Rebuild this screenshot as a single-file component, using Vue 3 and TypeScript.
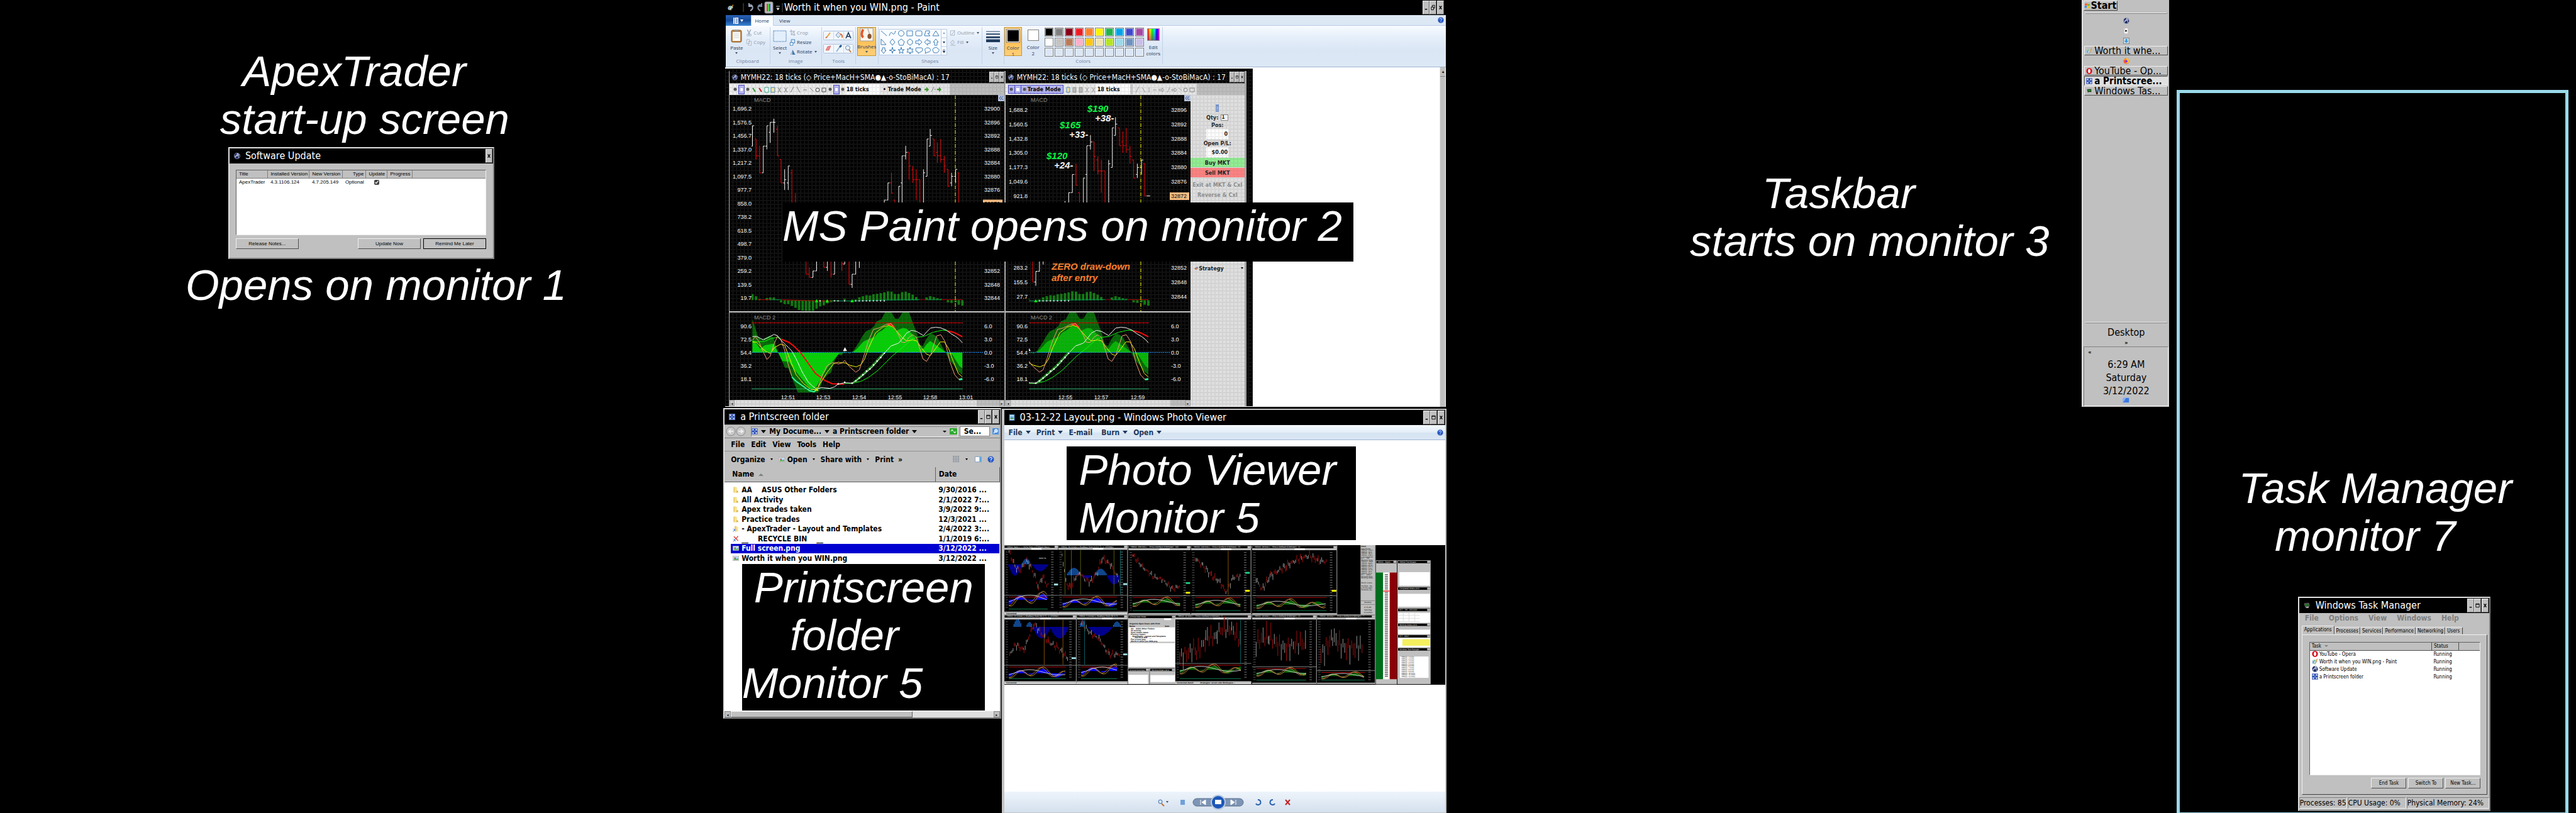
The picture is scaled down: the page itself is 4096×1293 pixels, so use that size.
<script setup lang="ts">
type Pt = [number, number]

const pts = (list: Pt[]): string => list.map((p) => p.join(',')).join(' ')

const captions = [
  { cls: 'cap-apex', lines: ['  ApexTrader', 'start-up screen'] },
  { cls: 'cap-opens', lines: ['Opens on monitor 1'] },
  { cls: 'cap-taskbar', lines: ['      Taskbar', 'starts on monitor 3'] },
  { cls: 'cap-manager', lines: ['Task Manager', '   monitor 7'] },
  { cls: 'boxed cap-paint', lines: ['MS Paint opens on monitor 2'] },
  { cls: 'boxed cap-folder', lines: [' Printscreen', '    folder', 'Monitor 5'] },
  { cls: 'boxed cap-photo', lines: [' Photo Viewer', ' Monitor 5'] },
]

// Price bars: x, high, low, open, close, falling
type Bar = [number, number, number, number, number, boolean]
const bars: Bar[] = [
  [138, 965, 1122, 1122, 965, false], [153, 1067, 1225, 1067, 1197, true], [168, 1120, 1328, 1197, 1328, true],
  [183, 1122, 1328, 1328, 1122, false], [198, 965, 1147, 1122, 965, false], [212, 938, 1097, 1015, 938, false],
  [227, 911, 1018, 938, 938, false], [242, 965, 1197, 992, 1197, true], [257, 1225, 1406, 1225, 1406, true],
  [272, 1301, 1461, 1406, 1381, false], [287, 1275, 1461, 1406, 1275, false], [302, 1301, 1562, 1328, 1562, true],
  [317, 1485, 1700, 1562, 1700, true], [332, 1640, 1860, 1700, 1800, true], [347, 1760, 1980, 1800, 1980, true],
  [361, 1900, 2110, 1980, 2110, true], [375, 2057, 2135, 2110, 2135, true], [390, 2085, 2135, 2135, 2085, false],
  [405, 1900, 2085, 2085, 1900, false], [420, 1850, 2000, 1900, 1950, true], [435, 1900, 2057, 1950, 2057, true],
  [450, 1920, 2085, 2057, 1950, false], [465, 1930, 2135, 1950, 2110, true], [480, 1900, 2110, 2110, 1920, false],
  [495, 1850, 1990, 1920, 1930, true], [510, 1930, 2085, 1930, 2030, true], [522, 1900, 2032, 2032, 1950, false],
  [540, 1950, 2188, 1950, 2188, true], [553, 2110, 2216, 2188, 2110, false], [568, 1940, 2110, 2110, 1960, false],
  [583, 1850, 2061, 1960, 1900, false], [598, 1800, 1940, 1900, 1850, false], [613, 1760, 1900, 1850, 1800, false],
  [627, 1740, 1860, 1800, 1780, false], [642, 1700, 1830, 1780, 1720, false], [657, 1660, 1800, 1720, 1700, false],
  [672, 1600, 1740, 1700, 1620, false], [687, 1538, 1700, 1620, 1538, false], [702, 1406, 1538, 1538, 1406, false],
  [717, 1328, 1485, 1406, 1485, true], [731, 1538, 1700, 1538, 1650, true], [747, 1432, 1650, 1650, 1432, false],
  [761, 1197, 1640, 1406, 1197, false], [776, 1120, 1225, 1197, 1170, false], [790, 1170, 1381, 1170, 1275, true],
  [806, 1275, 1406, 1301, 1381, true], [820, 1301, 1538, 1381, 1381, true], [835, 1381, 1650, 1381, 1640, true],
  [850, 1301, 1640, 1640, 1328, false], [865, 1067, 1355, 1355, 1067, false], [878, 990, 1122, 1122, 1040, false],
  [894, 1067, 1197, 1067, 1197, true], [908, 1093, 1250, 1170, 1197, true], [922, 1067, 1250, 1197, 1225, true],
  [937, 1197, 1328, 1225, 1275, true], [952, 1301, 1432, 1301, 1432, true], [967, 1328, 1432, 1406, 1355, false],
  [984, 1301, 1406, 1355, 1301, false], [997, 1328, 1562, 1328, 1562, true],
]

const histogram: Pt[] = [
  [138, 730], [153, 745], [168, 764], [198, 757], [212, 753], [227, 753], [242, 766], [257, 788], [272, 800], [287, 800],
  [302, 812], [317, 826], [332, 840], [347, 845], [361, 847], [375, 847], [390, 847], [405, 832], [420, 815], [435, 808],
  [450, 795], [465, 786], [480, 777], [522, 762], [568, 766], [583, 752], [598, 744], [613, 738], [627, 740], [642, 731],
  [657, 728], [672, 723], [687, 718], [702, 711], [717, 713], [731, 729], [746, 729], [761, 716], [776, 713], [790, 722],
  [805, 734], [820, 750], [863, 753], [878, 744], [893, 750], [908, 758], [922, 763], [952, 787], [967, 791], [984, 787],
  [997, 804], [1012, 810],
]

const darkArea = pts([
  [138, 1136], [138, 905], [150, 965], [160, 1020], [175, 1050], [190, 1035], [212, 1017], [225, 1030], [245, 1136],
  [258, 1180], [272, 1240], [287, 1245], [302, 1310], [317, 1370], [327, 1413], [412, 1413], [430, 1330], [450, 1290],
  [465, 1275], [480, 1190], [495, 1150], [510, 1155], [520, 1125], [530, 1136], [545, 1143], [560, 1120], [583, 1060],
  [600, 1010], [612, 985], [630, 975], [645, 950], [655, 920], [675, 905], [690, 858], [717, 858], [732, 900], [747, 900],
  [762, 858], [790, 858], [805, 925], [820, 990], [835, 1080], [847, 1090], [862, 1040], [878, 1005], [893, 1010],
  [908, 1030], [922, 1075], [940, 1130], [960, 1195], [975, 1220], [997, 1270], [1012, 1290], [1012, 1136],
])
const brightArea = pts([
  [138, 1136], [138, 1050], [153, 1070], [170, 1110], [190, 1085], [225, 1075], [245, 1136], [262, 1195], [290, 1200],
  [310, 1250], [340, 1310], [370, 1370], [385, 1395], [405, 1370], [425, 1310], [450, 1240], [480, 1180], [500, 1140],
  [555, 1136], [575, 1105], [600, 1060], [625, 1040], [645, 1030], [660, 1000], [680, 980], [700, 950], [717, 950],
  [735, 985], [765, 965], [780, 970], [805, 1010], [820, 1050], [840, 1110], [850, 1110], [862, 1080], [878, 1055],
  [908, 1090], [945, 1136], [970, 1150], [985, 1190], [1000, 1230], [1012, 1245], [1012, 1136],
])

const whiteLine = pts([
  [138, 1025], [153, 1022], [183, 1047], [205, 1030], [227, 1010], [242, 1018], [257, 1050], [275, 1080], [300, 1120],
  [320, 1180], [345, 1270], [370, 1340], [390, 1372], [405, 1388], [425, 1378], [460, 1384], [478, 1375], [495, 1355],
  [522, 1345], [553, 1348], [570, 1330], [600, 1290], [640, 1230], [687, 1140], [715, 1090], [747, 1070], [762, 1040],
  [780, 1000], [800, 982], [820, 988], [850, 1018], [865, 990], [880, 965], [900, 960], [920, 963], [945, 980],
  [965, 1005], [985, 1025], [1000, 1045], [1012, 1068],
])

interface Line { color: string; width: number; points: string }
const macdLines: Line[] = [
  { color: '#00ff00', width: 1, points: pts([[138, 1055], [160, 1062], [190, 1058], [212, 1040], [240, 1030], [257, 1042]]) },
  { color: '#ff0000', width: 2, points: pts([[257, 1042], [290, 1065], [310, 1090], [340, 1140], [370, 1210], [400, 1280], [440, 1330], [470, 1352], [520, 1355]]) },
  { color: '#00ff00', width: 1, points: pts([[520, 1350], [553, 1350], [590, 1335], [620, 1310], [660, 1260], [720, 1160], [760, 1105], [800, 1045], [820, 1030], [850, 1025], [890, 995], [930, 980], [950, 985]]) },
  { color: '#ff0000', width: 2, points: pts([[950, 985], [975, 995], [1000, 1015], [1012, 1026]]) },
  { color: '#ff0000', width: 3, points: pts([[700, 942], [717, 942], [728, 960]]) },
  { color: '#ffff00', width: 1, points: pts([[138, 1062], [155, 1065], [175, 1100], [195, 1130], [212, 1142], [230, 1100], [255, 1078], [272, 1085], [287, 1150], [300, 1210], [320, 1290], [350, 1350], [380, 1390], [405, 1395], [420, 1350], [450, 1270], [475, 1215], [495, 1203], [525, 1208], [545, 1225], [570, 1235], [590, 1220], [605, 1180], [620, 1110], [650, 1000], [680, 960], [705, 947], [720, 955], [740, 990], [760, 1030], [780, 1055], [805, 1048], [822, 1055], [840, 1100], [862, 1145], [878, 1157], [900, 1110], [920, 1062], [937, 1062], [955, 1110], [975, 1200], [995, 1280], [1012, 1305]]) },
  { color: '#ffa07a', width: 1, points: pts([[138, 1050], [150, 1025], [165, 1060], [180, 1120], [198, 1183], [212, 1160], [225, 1090], [242, 1022], [257, 1050], [272, 1120], [287, 1220], [302, 1300]]) },
  { color: '#2aff9c', width: 2, points: pts([[302, 1305], [320, 1335], [345, 1365], [375, 1400], [395, 1408], [405, 1390]]) },
  { color: '#ffa07a', width: 1, points: pts([[412, 1370], [430, 1290], [450, 1225], [470, 1207], [485, 1207], [495, 1215], [510, 1210], [522, 1190], [540, 1230], [568, 1272], [583, 1255], [600, 1170], [620, 1060], [642, 975], [665, 965], [695, 940], [715, 935], [730, 965], [745, 1010], [760, 1065], [775, 1065], [790, 1030], [805, 1012], [820, 1030], [835, 1110], [848, 1180], [863, 1197], [880, 1150], [905, 1020], [922, 1012], [940, 1060], [960, 1200], [980, 1290], [998, 1323]]) },
  { color: '#2aff9c', width: 3, points: pts([[998, 1323], [1012, 1319]]) },
  { color: '#107c10', width: 4, points: pts([[560, 1344], [600, 1285], [640, 1225], [687, 1135]]) },
  { color: '#ffffff', width: 1, points: whiteLine },
]

const baseLines: Line[] = [
  { color: '#c00000', width: 1, points: pts([[160, 769], [212, 769]]) },
  { color: '#009050', width: 1, points: pts([[212, 769], [257, 769]]) },
  { color: '#c00000', width: 1, points: pts([[257, 769], [400, 777], [470, 778]]) },
  { color: '#00b060', width: 1, points: pts([[470, 777], [560, 778], [700, 771], [835, 769]]) },
  { color: '#a00000', width: 1, points: pts([[835, 769], [863, 769]]) },
  { color: '#009050', width: 1, points: pts([[863, 769], [925, 769]]) },
  { color: '#c00000', width: 1, points: pts([[925, 769], [1012, 769]]) },
]
const baseDots: number[] = [420, 480, 495, 522, 568, 583, 598, 613, 627, 642, 657, 672, 687]
const curveDots: Pt[] = [[495, 1353], [522, 1342], [553, 1348], [568, 1333], [583, 1312], [598, 1290], [613, 1265], [627, 1250], [642, 1222], [657, 1195], [672, 1170], [687, 1140]]

interface Label { text: string; x: number; y: number }
interface Chart {
  id: string
  viewBox: string
  price: string
  volume: string
  clipX: number
  plotEnd: number
  cursorX: number
  left: string[]
  firstPrice: number
  top: number
  step: number
  leftX: number
  rightX: number
  marked: number
  times: Label[]
  green: string
  width: number
}
const charts: Chart[] = [
  {
    id: 'wide', viewBox: '1 0 437 486', price: 'matrix(.3819 0 0 .2062 -15.25 -150)', volume: 'matrix(.3819 0 0 .2292 -15.25 149.4)',
    clipX: 36, plotEnd: 372, cursorX: 360,
    left: ['1,696.2', '1,576.5', '1,456.7', '1,337.0', '1,217.2', '1,097.5', '977.7', '858.0', '738.2', '618.5', '498.7', '379.0', '259.2', '139.5', '19.7'],
    firstPrice: 32900, top: 22, step: 21.5, leftX: 36, rightX: 406, marked: 7,
    times: [['12:51', 94], ['12:53', 150], ['12:54', 207], ['12:55', 264], ['12:58', 320], ['13:01', 377]].map(([t, x]) => ({ text: String(t), x: Number(x), y: 481 })),
    green: '#00d000', width: 438,
  },
  {
    id: 'slim', viewBox: '0 0 294 486', price: 'matrix(.3899 0 0 .2188 -167.6 -181.2)', volume: 'matrix(.3899 0 0 .2292 -167.6 149.4)',
    clipX: 37, plotEnd: 228, cursorX: 215,
    left: ['1,688.2', '1,560.5', '1,432.8', '1,305.0', '1,177.3', '1,049.6', '921.8', '794.1', '666.4', '538.7', '410.9', '283.2', '155.5', '27.7'],
    firstPrice: 32896, top: 24, step: 22.83, leftX: 35, rightX: 263, marked: 6,
    times: [['12:55', 95], ['12:57', 152], ['12:59', 210]].map(([t, x]) => ({ text: String(t), x: Number(x), y: 481 })),
    green: '#00b400', width: 294,
  },
]
// Scale labels lying under the caption strip are not rendered
const underStrip = (c: Chart, i: number): boolean => {
  const y = c.top + i * c.step
  return y > 176 && y < 264
}
const leftScale = (c: Chart): Label[] =>
  c.left.map((text, i) => ({ text, x: c.leftX, y: c.top + i * c.step + 3 })).filter((_, i) => c.id === 'wide' || !underStrip(c, i))
const rightScale = (c: Chart): (Label & { marked: boolean })[] =>
  c.left.map((_, i) => ({ text: String(c.firstPrice - 4 * i), x: c.rightX, y: c.top + i * c.step + 3, marked: i === c.marked })).filter((_, i) => !underStrip(c, i))
const lowerLeft = ['90.6', '72.5', '54.4', '36.2', '18.1']
const lowerRight = ['6.0', '3.0', '0.0', '-3.0', '-6.0']
const gains: Label[] = [
  { text: '$190', x: 130, y: 22 }, { text: '$165', x: 86, y: 48 }, { text: '$120', x: 65, y: 97 },
]
const ticks: Label[] = [
  { text: '+38-', x: 142, y: 37 }, { text: '+33-', x: 101, y: 63 }, { text: '+24-', x: 77, y: 112 },
]
const chartTitle = 'MYMH22: 18 ticks (◇ Price+MacH+SMA●▲-o-StoBiMacA) : 17'

const palette = [
  '#000000', '#7f7f7f', '#880015', '#ed1c24', '#ff7f27', '#fff200', '#22b14c', '#00a2e8', '#3f48cc', '#a349a4',
  '#ffffff', '#c3c3c3', '#b97a57', '#ffaec9', '#ffc90e', '#efe4b0', '#b5e61d', '#99d9ea', '#7092be', '#c8bfe7',
  '', '', '', '', '', '', '', '', '', '',
]

const files = [
  { icon: 'i-folder', name: 'AA    ASUS Other Folders', date: '9/30/2016 ...' },
  { icon: 'i-folder', name: 'All Activity', date: '2/1/2022 7:...' },
  { icon: 'i-folder', name: 'Apex trades taken', date: '3/9/2022 9:...' },
  { icon: 'i-folder', name: 'Practice trades', date: '12/3/2021 ...' },
  { icon: 'i-link', name: '- ApexTrader - Layout and Templates', date: '2/4/2022 3:...' },
  { icon: 'i-bin', name: '__    RECYCLE BIN    __', date: '1/1/2019 6:...' },
  { icon: 'i-png', name: 'Full screen.png', date: '3/12/2022 ...', selected: true },
  { icon: 'i-png', name: 'Worth it when you WIN.png', date: '3/12/2022 ...' },
]

const tasks = [
  { icon: 'i-opera', name: 'YouTube - Opera' },
  { icon: 'i-paint', name: 'Worth it when you WIN.png - Paint' },
  { icon: 'i-apex', name: 'Software Update' },
  { icon: 'i-grid', name: 'a Printscreen folder' },
]

const taskItems = [
  { icon: 'i-apex' }, { icon: 'i-cards' }, { icon: 'i-down' },
  { icon: 'i-paint', text: 'Worth it whe...' },
  { icon: 'i-fox' },
  { icon: 'i-opera', text: 'YouTube - Op...' },
  { icon: 'i-grid', text: 'a Printscree...', active: true },
  { icon: 'i-cpu', text: 'Windows Tas...' },
]

// Thumbnails inside the photographed layout
interface Mini {
  x: number; y: number; w: number; split: number; bottom: number; title: string
  path: Pt[]; noise: number; base: number; amp: number; fill: string
  humps?: [number, number, number, number][]
}
const minis: Mini[] = [
  { x: 22, y: 60, w: 186, split: 455, bottom: 596, title: 'YMH22: Daily (...~ (%/%) Histo-o-STOMacA (Navy)', path: [[38, 110], [60, 230], [75, 260], [100, 180], [115, 240], [130, 320], [140, 390], [155, 300], [165, 360], [175, 380]], noise: 50, base: 492, amp: 60, fill: '#0000ff', humps: [[38, 80, 210, 300], [85, 112, 210, 165], [120, 172, 210, 265]] },
  { x: 209, y: 60, w: 240, split: 455, bottom: 596, title: 'YMH22: 30 minute (+ BlueNavy Histo) O-H-C TL -o- (STOMAC)', path: [[222, 130], [235, 350], [250, 400], [270, 310], [285, 280], [300, 330], [320, 350], [345, 270], [360, 160], [390, 210], [410, 290], [425, 370]], noise: 55, base: 515, amp: 45, fill: '#0000ff', humps: [[240, 286, 297, 238], [290, 325, 297, 322], [335, 376, 297, 245], [380, 426, 297, 370]] },
  { x: 452, y: 63, w: 215, split: 458, bottom: 608, title: 'YMH22: 256 ticks (.... Price-o-StoMacA 9 DkGreen) : 183', path: [[465, 130], [500, 230], [540, 310], [570, 330], [605, 410], [632, 380]], noise: 45, base: 515, amp: 40, fill: '#006400' },
  { x: 669, y: 63, w: 208, split: 458, bottom: 608, title: 'YMH22: 128 ticks (.... Price-o-StoMacA 9 DkGreen) : 55', path: [[683, 160], [710, 220], [740, 300], [770, 350], [790, 430], [815, 320], [840, 300]], noise: 55, base: 523, amp: 40, fill: '#006400' },
  { x: 881, y: 63, w: 294, split: 458, bottom: 608, title: 'YMH22: 29 ticks (.... Price-o-StoMacA 9 DkGreen) : 11', path: [[895, 330], [915, 410], [945, 300], [1000, 220], [1040, 170], [1080, 140], [1110, 180], [1140, 190]], noise: 60, base: 530, amp: 40, fill: '#006400' },
  { x: 22, y: 615, w: 249, split: 1012, bottom: 1150, title: 'YMH22: 15 minute (+ BlueNavy Histo) 60 m TL -o- (STOMAC)', path: [[40, 930], [60, 850], [90, 890], [115, 740], [125, 680], [150, 760], [175, 830], [205, 870], [242, 960]], noise: 55, base: 1078, amp: 45, fill: '#0000ff', humps: [[55, 80, 708, 645], [100, 118, 708, 670], [122, 180, 708, 800], [182, 244, 708, 800]] },
  { x: 273, y: 615, w: 176, split: 1012, bottom: 1150, title: 'YMH22: 5 minute (+ BlueNavy Histo) 60 m TL', path: [[290, 680], [320, 760], [350, 800], [385, 930], [424, 925]], noise: 50, base: 1060, amp: 50, fill: '#0000ff', humps: [[286, 300, 708, 650], [315, 395, 708, 780], [400, 424, 708, 665]] },
  { x: 615, y: 615, w: 263, split: 997, bottom: 1150, title: 'YMH22: 22 ticks (.... Price-o-StoMacA 9 DkGreen) : 5', path: [[630, 920], [688, 900], [720, 790], [760, 760], [810, 740], [842, 850]], noise: 170, base: 1050, amp: 42, fill: '#006400' },
  { x: 881, y: 615, w: 223, split: 1024, bottom: 1162, title: 'YMH22: 18 ticks (.... Price-o-StoMacA 9 DkGreen) : 13', path: [[895, 860], [940, 790], [1000, 860], [1070, 870]], noise: 190, base: 1072, amp: 36, fill: '#006400' },
  { x: 1106, y: 615, w: 202, split: 1055, bottom: 1162, title: 'YMH22: 16 ticks (.... Price-o-StoMacA 9 DkGreen) : 7', path: [[1120, 900], [1160, 800], [1220, 860], [1265, 900]], noise: 200, base: 1100, amp: 30, fill: '#006400' },
]

const wave = (n: number): number => Math.sin(n * 12.9898) * 0.6 + Math.sin(n * 4.1414) * 0.4

function miniBars(m: Mini): { d: string; red: boolean }[] {
  const out: { d: string; red: boolean }[] = []
  const stride = m.noise > 100 ? 6 : 4
  for (let i = 0; i < m.path.length - 1; i++) {
    const [x0, y0] = m.path[i]
    const [x1, y1] = m.path[i + 1]
    for (let x = x0; x < x1; x += stride) {
      const y = y0 + ((y1 - y0) * (x - x0)) / (x1 - x0)
      const c = y + wave(x) * m.noise * 0.4
      const h = m.noise * (0.15 + 0.25 * Math.abs(wave(x + 7)))
      out.push({ d: `M${x} ${(c - h).toFixed(0)}V${(c + h).toFixed(0)}`, red: wave(x * 3) > -0.1 })
    }
  }
  return out
}
function miniHumps(m: Mini): { d: string; up: boolean }[] {
  return (m.humps ?? []).flatMap(([x0, x1, base, peak]) => {
    const list: { d: string; up: boolean }[] = []
    for (let x = x0; x <= x1; x += 4) {
      const k = Math.sin((Math.PI * (x - x0 + 4)) / (x1 - x0 + 8))
      list.push({ d: `M${x} ${base}V${(base + (peak - base) * k).toFixed(0)}`, up: peak < base })
    }
    return list
  })
}
function miniWave(m: Mini, scale: number, speed: number, shift: number): string {
  const list: Pt[] = []
  const end = m.x + m.w - 36
  for (let x = m.x + 15; x <= end; x += 4) {
    const t = (x - m.x) / 11
    list.push([x, Math.round(m.base - 5 + m.amp * scale * (Math.sin(t * speed + shift) * 0.75 + Math.sin(t * 0.4 + shift) * 0.4))])
  }
  return pts(list)
}
function miniArea(m: Mini): string {
  return `${m.x + 15},${m.base} ${miniWave(m, 0.75, 0.8, 1)} ${m.x + m.w - 36},${m.base}`
}
const sx = (x: number): number => Math.round((x - 22) * 0.4583)
const sy = (y: number): number => Math.round((y - 57) * 0.1996)
const miniMenu = ['ApexTrader', 'YMH22: 128 t...', 'YMH22: 18 ti...', 'YMH22: 16 ti...', 'YMH22: 256 t...', 'Completed Or...', 'M-7    YM', 'Working Orde...', 'YMH22 - Dept...', 'YMH22: Daily...', 'YMH22: 30 m...', 'YMH22 Tick S...', 'YMH22: 5 mi...', 'YMH22: 15 m...', 'YMH22: 29 ti...', 'YMH22: 22 ti...', 'M-7    OHLC', 'Account Sum...', 'Working Orde...']
const miniWindows = [
  { x: 1310, y: 178, w: 73, h: 987, title: 'YMH22 - Depth ...' },
  { x: 1385, y: 178, w: 115, h: 212, title: 'YMH22 Tick Stream' },
  { x: 1385, y: 390, w: 115, h: 170, title: 'Completed Orders All:0' },
  { x: 1385, y: 560, w: 115, h: 118, title: 'M-7    YM    03/12/22' },
  { x: 1385, y: 678, w: 115, h: 92, title: 'Working Orders All:0' },
  { x: 1385, y: 770, w: 115, h: 104, title: 'M-7   OHLC' },
  { x: 1385, y: 874, w: 115, h: 290, title: 'Windows Task Manager' },
  { x: 450, y: 615, w: 165, h: 422, title: 'a Printscreen folder' },
  { x: 450, y: 1037, w: 75, h: 127, title: 'Account Summary' },
  { x: 526, y: 1037, w: 89, h: 127, title: 'Working Orders All:0' },
]
const ladder = Array.from({ length: 58 }, (_, i) => 288 + i * 14.2)
</script>

<template>
  <main class="desktop">
    <svg class="defs" aria-hidden="true">
      <symbol id="i-apex" viewBox="0 0 16 16"><circle cx="8" cy="8" r="7.5" fill="#1d2b66" stroke="#b8bccb" /><path d="M3 13 9 2l3 11M2 9l12-4M9 2l3 1" fill="none" stroke="#e8eaf2" stroke-width="1.4" /></symbol>
      <symbol id="i-grid" viewBox="0 0 16 16"><rect width="16" height="16" fill="#8fa0d8" /><rect x="1" y="1" width="14" height="14" fill="#2a4db0" /><path d="M3 6V3h3M10 3h3v3M13 10v3h-3M6 13H3v-3M3 3l3 3M13 3l-3 3M13 13l-3-3M3 13l3-3M7 8h2" stroke="#fff" stroke-width="1.5" fill="none" /></symbol>
      <symbol id="i-paint" viewBox="0 0 16 16"><path d="M1 11C0 6 4 3 9 4c4 0 5 3 4 5s-3 0-4 2 0 3-3 3-5-1-5-3z" fill="#bfe4f5" stroke="#5a9cc0" stroke-width=".7" /><circle cx="4" cy="8" r="1.4" fill="#e03030" /><circle cx="7" cy="6.500" r="1.300" fill="#38a838" /><circle cx="4" cy="11" r="1.200" fill="#3060d0" /><path d="M14 1 9 12l-1 3" stroke="#e09a3c" stroke-width="2" fill="none" /></symbol>
      <symbol id="i-opera" viewBox="0 0 16 16"><ellipse cx="8" cy="8" rx="7.500" ry="7.800" fill="#d8131f" /><ellipse cx="8" cy="8" rx="3" ry="5.300" fill="#fff" /></symbol>
      <symbol id="i-cpu" viewBox="0 0 16 16"><path d="M2 3 13 2l1 8-10 1z" fill="#163c16" stroke="#aaa" /><path d="M4 7l2-2 2 3 2-3 2 2" stroke="#3be03b" fill="none" stroke-width="1.300" /><path d="M5 12l7-1 1 3H6z" fill="#ddd" stroke="#888" stroke-width=".5" /></symbol>
      <symbol id="i-fox" viewBox="0 0 16 16"><circle cx="8" cy="8.500" r="7.300" fill="#ff5a36" /><path d="M2 5c1-3 4-2 5-1 1-3 3-4 4-4 0 2 4 4 4 9-1 5-7 7-11 4 5 1 8-2 7-5S7 4 2 5z" fill="#ffc531" /><circle cx="8" cy="8.500" r="3" fill="#7542e5" /></symbol>
      <symbol id="i-cards" viewBox="0 0 16 16"><path d="M2 2 11 1l1 14-9 0z" fill="#fff" stroke="#aaa" stroke-width=".6" /><path d="M11 2l2 2-1 11" fill="#d8c4c4" /><circle cx="7" cy="8" r="2.500" fill="#222" /><circle cx="4" cy="3.500" r=".8" fill="#d33" /></symbol>
      <symbol id="i-down" viewBox="0 0 16 16"><rect x=".5" y=".5" width="15" height="15" fill="#c9d6de" stroke="#666" /><path d="M6 3h4v5h3l-5 5-5-5h3z" fill="#2c93dc" /></symbol>
      <symbol id="i-flag" viewBox="0 0 16 16"><path d="M2 3c2-1 4-1 6 0L7 8C5 7 3 7 1 8z" fill="#ee5a24" /><path d="M9 3c2 1 4 1 6 0l-1 5c-2 1-4 1-6 0z" fill="#7bbf2a" /><path d="M1 9c2-1 4-1 6 0l-1 5c-2-1-4-1-6 0z" fill="#3d8ee0" /><path d="M8 9c2 1 4 1 6 0l-1 5c-2 1-4 1-6 0z" fill="#fcc419" /></symbol>
      <symbol id="i-photo" viewBox="0 0 16 16"><path d="M2 1h12v14H2z" fill="#e8f2fa" stroke="#4a90c8" stroke-width="2" /><path d="M4 4h8v6H4z" fill="#6fb5e8" /><path d="M4 10l3-3 3 2 2-1v4H4z" fill="#3f8f5a" /></symbol>
      <symbol id="i-folder" viewBox="0 0 16 16"><path d="M2 1h7v14H2z" fill="#eccd66" /><path d="M5 2h6v13H5z" fill="#f8e49a" /><path d="M10 9l4 2v4h-5z" fill="#e0bb4c" /></symbol>
      <symbol id="i-link" viewBox="0 0 16 16"><path d="M5 1h5v13H5z" fill="#eccd66" /><path d="M9 3h5v12H9z" fill="#f8e49a" /><rect y="8" width="8" height="8" fill="#fff" stroke="#777" stroke-width=".5" /><path d="M2 14l3-3M3 10h3v3" stroke="#1652b8" stroke-width="1.500" fill="none" /></symbol>
      <symbol id="i-bin" viewBox="0 0 16 16"><path d="M3 2l11 11M14 1 5 11" stroke="#e02020" stroke-width="1.800" /><rect y="8" width="8" height="8" fill="#fff" stroke="#777" stroke-width=".5" /><path d="M2 14l3-3M3 10h3v3" stroke="#1652b8" stroke-width="1.500" fill="none" /></symbol>
      <symbol id="i-png" viewBox="0 0 16 16"><rect x=".5" y="2.500" width="15" height="11" fill="#fff" stroke="#999" /><rect x="2" y="4" width="12" height="8" fill="#a8d4f0" /><path d="M2 12l4-5 3 3 5-2v4z" fill="#4ca33c" /><circle cx="6" cy="7" r="1.800" fill="#c8452c" /></symbol>
      <symbol id="i-help" viewBox="0 0 16 16"><circle cx="8" cy="8" r="7.500" fill="#2456c8" stroke="#9ab" /><path d="M5.500 6c0-3.500 5-3.500 5 0 0 2-2.500 2-2.500 4M8 11.500v1.500" stroke="#fff" stroke-width="1.600" fill="none" /></symbol>
      <symbol id="i-min" viewBox="0 0 10 20"><path d="M3 13h4" stroke="#000" stroke-width="1.500" /></symbol>
      <symbol id="i-max" viewBox="0 0 10 20"><path d="M2 7h6v6H2zM2 8h6" stroke="#000" fill="none" /></symbol>
      <symbol id="i-restore" viewBox="0 0 10 20"><path d="M4 9V6h4v5H6M2 9h4v5H2z" stroke="#000" fill="none" /></symbol>
      <symbol id="i-close" viewBox="0 0 10 20"><path d="M3 7l4 6M7 7l-4 6" stroke="#000" stroke-width="1.500" /></symbol>
    </svg>

    <section class="window update" aria-label="Software Update">
      <header class="titlebar">
        <svg class="ico"><use href="#i-apex" /></svg>
        <span class="title">Software Update</span>
        <button class="chrome" aria-label="Close"><svg><use href="#i-close" /></svg></button>
      </header>
      <div class="update-body">
        <div class="sunken update-list">
          <table>
            <thead>
              <tr><th class="c1">Title</th><th class="c2">Installed Version</th><th class="c3">New Version</th><th class="c4">Type</th><th class="c5">Update</th><th class="c6">Progress</th><th></th></tr>
            </thead>
            <tbody>
              <tr><td>ApexTrader</td><td>4.3.1106.124</td><td>4.7.205.149</td><td>Optional</td><td class="mid"><input type="checkbox" checked aria-label="Update ApexTrader"></td><td></td><td></td></tr>
            </tbody>
          </table>
        </div>
        <div class="update-actions">
          <button class="push">Release Notes...</button>
          <span class="grow"></span>
          <button class="push">Update Now</button>
          <button class="push default">Remind Me Later</button>
        </div>
      </div>
    </section>

    <section class="paint" aria-label="Paint">
      <header class="titlebar paint-title">
        <svg class="ico"><use href="#i-paint" /></svg>
        <span class="quick">
          <svg viewBox="0 0 66 20" aria-hidden="true"><path d="M2 3v14M64 3v14" stroke="#555" /><path d="M11 6c6-2 8 6 2 9M11 3v5h5" stroke="#9aa6bd" stroke-width="2" fill="none" /><path d="M31 6c-6-2-8 6-2 9M31 3v5h-5" stroke="#7c88a0" stroke-width="2" fill="none" /><rect x="36" y="1" width="13" height="18" rx="2" fill="#bbb" stroke="#888" /><path d="M40 4v12" stroke="#e04040" stroke-width="2" /><path d="M42 4v12" stroke="#50d040" stroke-width="2" /><path d="M44 4v12" stroke="#4060e0" stroke-width="2" /><path d="M54 8h6M55 11l2 3 2-3z" stroke="#ddd" fill="#ddd" /></svg>
        </span>
        <span class="title">Worth it when you WIN.png - Paint</span>
        <button class="chrome" aria-label="Minimize"><svg><use href="#i-min" /></svg></button>
        <button class="chrome" aria-label="Restore"><svg><use href="#i-restore" /></svg></button>
        <button class="chrome last" aria-label="Close"><svg><use href="#i-close" /></svg></button>
      </header>
      <nav class="tabs">
        <button class="filemenu" aria-label="Paint menu"><svg viewBox="0 0 20 12"><path d="M2 1h8v10H2z" fill="#fff" /><path d="M4 1v10M6 3h3M6 5h3M6 7h3M6 9h3" stroke="#2a5caa" /><path d="M13 4h5l-2.500 4z" fill="#fff" /></svg></button>
        <button class="tab current">Home</button>
        <button class="tab">View</button>
        <span class="grow"></span>
        <svg class="help"><use href="#i-help" /></svg>
      </nav>
      <div class="ribbon">
        <div class="group g-clip">
          <div class="controls">
            <button class="big"><svg viewBox="0 0 18 22"><rect x="1" y="2" width="16" height="19" rx="2" fill="#c48a4a" stroke="#8a5a28" /><path d="M3 5h12v14H3z" fill="#fff" /><path d="M6 1h6v4H6z" fill="#999" /><path d="M5 8h8M5 11h8M5 14h8" stroke="#bcc" /></svg>Paste<i class="arrow"></i></button>
            <div class="stack">
              <button class="small dim"><svg viewBox="0 0 10 12"><path d="M2 0l4 8M8 0 4 8" stroke="#9aa8b8" stroke-width="1.500" /><circle cx="3" cy="9.500" r="1.800" fill="none" stroke="#9aa8b8" /><circle cx="7" cy="9.500" r="1.800" fill="none" stroke="#9aa8b8" /></svg>Cut</button>
              <button class="small dim"><svg viewBox="0 0 10 12"><path d="M1 1h5v7H1zM4 4h5v7H4z" fill="#eef2f7" stroke="#a8b4c4" /></svg>Copy</button>
            </div>
          </div>
          <span class="glabel">Clipboard</span>
        </div>
        <div class="group g-image">
          <div class="controls">
            <button class="big"><svg viewBox="0 0 22 22"><rect x="1" y="3" width="20" height="17" fill="#e3effb" stroke="#2f6fb0" stroke-dasharray="1.500 1" /></svg>Select<i class="arrow"></i></button>
            <div class="stack">
              <button class="small dim"><svg viewBox="0 0 10 12"><path d="M3 0v9h7M0 3h8v8M3 9l6-7" stroke="#9ab" fill="none" /></svg>Crop</button>
              <button class="small"><svg viewBox="0 0 10 12"><path d="M3 1h6v6H3z" fill="#d8ecfa" stroke="#3a7cb8" /><path d="M1 6h5v5H1z" fill="#fff" stroke="#3a7cb8" /></svg>Resize</button>
              <button class="small"><svg viewBox="0 0 10 12"><path d="M1 11h4V3z" fill="#bbb" /><path d="M5 11h5L5 2z" fill="#3a7cb8" /></svg>Rotate<i class="arrow"></i></button>
            </div>
          </div>
          <span class="glabel">Image</span>
        </div>
        <div class="group g-tools">
          <div class="controls">
            <svg class="tools" viewBox="0 0 48 40" aria-label="Tools">
              <rect x=".5" y="3.500" width="47" height="14" rx="1" fill="#f2f7fd" stroke="#b0c4de" /><rect x=".5" y="24.500" width="47" height="14" rx="1" fill="#f2f7fd" stroke="#b0c4de" />
              <path d="M16.500 4v13M32.500 4v13M16.500 25v13M32.500 25v13" stroke="#cdd9e8" />
              <path d="M5 14l6-8" stroke="#e8a33c" stroke-width="2" /><path d="M3 15l2-3 1 2z" fill="#d44" />
              <path d="M20 10l4-5 4 4-4 5z" fill="#dbe7f2" stroke="#5580aa" stroke-width=".8" /><path d="M27 8q4 1 3 6" stroke="#f06a2a" stroke-width="2" fill="none" />
              <path d="M36 15l4-9 4 9M37.500 12h5" stroke="#1e395b" stroke-width="1.600" fill="none" />
              <path d="M4 34l3-6 5-1-3 7z" fill="#f08888" stroke="#c25a5a" stroke-width=".6" />
              <path d="M21 36l5-7" stroke="#8fb4d8" stroke-width="2" /><path d="M26 29l3-3" stroke="#1e5590" stroke-width="3" />
              <circle cx="39" cy="30" r="3.500" fill="#e8f2fb" stroke="#6b8bb0" /><path d="M41 33l3 4" stroke="#c87a3c" stroke-width="2" />
            </svg>
          </div>
          <span class="glabel">Tools</span>
        </div>
        <div class="group g-brush">
          <button class="big hot"><svg viewBox="0 0 24 24"><rect x="1" y="1" width="22" height="22" fill="#fdf6ec" stroke="#999" /><path d="M6 3q-5 9 0 14" stroke="#e8562a" stroke-width="4" fill="none" /><path d="M14 2l3 9" stroke="#bbb" stroke-width="2" /><ellipse cx="17" cy="15" rx="3.500" ry="4.500" fill="#8a5630" /></svg>Brushes<i class="arrow"></i></button>
        </div>
        <div class="group g-shapes">
          <div class="controls">
            <svg class="gallery" viewBox="0 0 108 42" aria-label="Shapes">
              <rect x=".5" y=".5" width="107" height="41" fill="#f8fbff" stroke="#b9cbe2" /><path d="M98.500 0v42M98.500 14h9M98.500 28h9" stroke="#b9cbe2" />
              <g fill="none" stroke="#3f7fb8">
                <path d="M3 3l9 8M16 11q2-8 5-4t5-4" /><circle cx="35" cy="7" r="4.500" /><path d="M44 3h9v8h-9z" /><rect x="58" y="3" width="10" height="8" rx="2" /><path d="M72 11l2-8h6v4h-3l4 4zM85 11l5-8 5 8z" />
                <path d="M3 16v9h8zM21 16l4 5-4 5-4-5zM35 16l5 4-2 6h-6l-2-6zM49 16l4 3v4l-4 3-4-3v-4zM58 19h5v-3l5 5-5 5v-3h-5zM81 19h-4v-3l-5 5 5 5v-3h4zM90 16l4 5h-2v5h-4v-5h-2z" />
                <path d="M5 30h4v4h2l-4 5-4-5h2zM21 29l1 4 4 1-4 1-1 4-1-4-4-1 4-1zM35 29l1 4h4l-3 2 1 4-3-2-3 2 1-4-3-2h4zM49 29l1 3h4l-2 2 2 3h-4l-1 3-1-3h-4l2-3-2-2h4z" /><path d="M60 30h7q2 0 2 3t-4 4l-3 2v-2q-4 0-4-4t2-3z" /><path d="M77 30c6 0 6 7 0 7l-4 2 1-3c-3-3-1-6 3-6z" /><path d="M88 30q3-2 5 1 4 2 1 5-1 3-4 2-4 1-4-2-3-4 2-6z" />
              </g>
              <path d="M101 8l2-3 2 3z" fill="#9ab" /><path d="M101 20l2 3 2-3z" fill="#1e395b" /><path d="M101 35l2 3 2-3zM101 33h4" fill="#1e395b" stroke="#1e395b" stroke-width=".6" />
            </svg>
            <div class="stack">
              <button class="small dim"><svg viewBox="0 0 10 12"><path d="M1 2h7v8H1zM3 9l6-8" stroke="#a8b4c4" fill="none" /></svg>Outline<i class="arrow"></i></button>
              <button class="small dim"><svg viewBox="0 0 10 12"><path d="M1 6l4-4 3 4-4 4z" fill="#dde4ee" stroke="#a8b4c4" /><path d="M1 11h9" stroke="#a8b4c4" /></svg>Fill<i class="arrow"></i></button>
            </div>
          </div>
          <span class="glabel">Shapes</span>
        </div>
        <div class="group g-size">
          <button class="big"><svg viewBox="0 0 24 22"><path d="M0 3.500h24" stroke="#1e395b" /><path d="M0 8h24" stroke="#1e395b" stroke-width="2" /><path d="M0 13.500h24" stroke="#1e395b" stroke-width="3" /><path d="M0 19.500h24" stroke="#1e395b" stroke-width="5" /></svg>Size<i class="arrow"></i></button>
        </div>
        <div class="group g-colors">
          <div class="controls">
            <button class="big hot pick"><span class="chip black"></span>Color<br>1</button>
            <button class="big pick"><span class="chip white"></span>Color<br>2</button>
            <div class="swatches">
              <button v-for="(c, i) in palette" :key="i" :style="{ backgroundColor: c || 'transparent' }" :aria-label="'Color ' + (i + 1)"></button>
            </div>
            <button class="big pick edit"><span class="rainbow"></span>Edit<br>colors</button>
          </div>
          <span class="glabel">Colors</span>
        </div>
      </div>

      <div class="canvas">
        <div class="picture">
          <article v-for="c in charts" :key="c.id" class="chartwin" :class="c.id">
            <header class="charttitle">
              <svg class="cico"><use href="#i-apex" /></svg>
              <span>{{ chartTitle }}</span>
              <span class="cbtns"><button class="chrome" aria-label="Minimize"><svg><use href="#i-min" /></svg></button><button class="chrome" aria-label="Maximize"><svg><use href="#i-max" /></svg></button><button class="chrome" aria-label="Close"><svg><use href="#i-close" /></svg></button></span>
            </header>
            <div v-if="c.id === 'wide'" class="charttools">
              <svg viewBox="0 0 182 17" class="t182"><rect x="12.500" y="1.500" width="9" height="14" fill="#b6b6f4" stroke="#4747c8" /><rect x="163.500" y="1.500" width="9" height="14" fill="#b6b6f4" stroke="#4747c8" /><path d="M15 6h4v5h-4zM166 6h4v5h-4z" fill="#fff" /><g fill="#555"><circle cx="7" cy="8" r="2.500" /><circle cx="27" cy="8" r="2.500" /><circle cx="158" cy="8" r="2.500" /><circle cx="178" cy="8" r="2.500" /></g><path d="M35 6l4 6" stroke="#2a9a2a" stroke-width="2" /><path d="M45 6l4 6" stroke="#c22" stroke-width="2" /><path d="M54 5h6v8h-6z" fill="#fff" stroke="#3a8" /><path d="M64 5h6v8h-6z" fill="#f6e7a0" stroke="#48c" /><path d="M75 5l5 8M80 5l-5 8M85 5l5 8M90 5l-5 8M95 13l5-9M105 4l5 9M115 9h6M126 6l5 5" stroke="#777" fill="none" /><circle cx="138" cy="9" r="3" fill="none" stroke="#444" /><path d="M145 6h6v6h-6z" fill="none" stroke="#444" /></svg>
              <input class="ticks" aria-label="Interval" value="18 ticks" readonly>
              <span class="mode">• Trade Mode</span>
              <svg viewBox="0 0 30 17" class="t30"><path d="M1 7h3V4l4 4.500-4 4v-3H1zM21 7h3V4l4 4.500-4 4v-3h-3z" fill="#3f9a2c" /><path d="M12 12l4-8M16 8h3" stroke="#888" /></svg>
            </div>
            <div v-else class="charttools">
              <button class="modebtn"><svg viewBox="0 0 30 14"><circle cx="4" cy="7" r="2.500" fill="#555" /><path d="M9.500 0v14M19.500 0v14" stroke="#4747c8" /><path d="M12 5h5v5h-5z" fill="#fff" /><circle cx="25" cy="7" r="2.500" fill="#555" /></svg>Trade Mode</button>
              <svg viewBox="0 0 52 17" class="t52"><path d="M5 5h5v8H5z" fill="#f6e7a0" stroke="#48c" /><path d="M15 5h5v8h-5zM25 5h5v8h-5z" fill="#bbb" stroke="#999" /><path d="M35 5l5 8M40 5l-5 8M45 5l5 8M50 5l-5 8" stroke="#999" /></svg>
              <input class="ticks" aria-label="Interval" value="18 ticks" readonly>
              <svg viewBox="0 0 104 17" class="t104"><path d="M5 13l5-9M15 5l5 8M26 5v8M32 9h6M42 8h5v-2l3 3-3 3v-2h-5zM55 13l4-8M62 8h5v-2l3 3-3 3v-2h-5zM73 6l5 4" stroke="#999" fill="none" /><circle cx="84" cy="9" r="3" fill="none" stroke="#888" /><path d="M91 6h7v6h-7z" fill="none" stroke="#888" /></svg>
            </div>
            <div class="chartbody">
              <svg class="plot" :viewBox="c.viewBox" role="img" :aria-label="chartTitle">
                <defs>
                  <clipPath :id="'up-' + c.id"><rect :x="c.clipX" y="0" width="400" height="344" /></clipPath>
                  <clipPath :id="'low-' + c.id"><rect :x="c.clipX" y="346" width="400" height="140" /></clipPath>
                </defs>
                <rect :width="c.width" height="486" fill="#000" />
                <g :clip-path="`url(#up-${c.id})`">
                  <g :transform="c.volume">
                    <rect v-for="h in histogram" :key="h[0]" :x="h[0] - 5" :y="Math.min(h[1], 772)" width="10" :height="Math.abs(772 - h[1])" fill="#0a780a" />
                    <polyline v-for="(l, i) in baseLines" :key="i" class="ln" :points="l.points" :stroke="l.color" :stroke-width="l.width" />
                    <rect v-for="d in baseDots" :key="'d' + d" :x="d - 3" y="773" width="5" height="8" fill="#fff" />
                    <path d="M398 787l7-22 7 22zM442 787l7-22 7 22zM546 787l7-22 7 22z" fill="#00ff00" />
                  </g>
                  <g :transform="c.price">
                    <path v-for="b in bars" :key="b[0]" class="ln" :d="`M${b[0]} ${b[1]}V${b[2]}M${b[0] - 6} ${b[3]}H${b[0]}M${b[0]} ${b[4]}H${b[0] + 7}`" :stroke="b[5] ? '#f00000' : '#ffffff'" stroke-width="1" />
                    <path class="ln" d="M1005 1562h14" stroke="#fff" stroke-width="1" />
                  </g>
                </g>
                <path :d="`M${c.cursorX} 1V344`" stroke="#ffff00" stroke-dasharray="6 2 1 2" />
                <g :clip-path="`url(#low-${c.id})`">
                  <g :transform="c.volume">
                    <polygon :points="darkArea" fill="#006400" />
                    <polygon :points="brightArea" :fill="c.green" />
                    <polyline v-for="(l, i) in macdLines" :key="i" class="ln" :points="l.points" :stroke="l.color" :stroke-width="l.width" />
                    <rect v-for="(d, i) in curveDots" :key="'c' + i" :x="d[0] - 3" :y="d[1] - 5" width="6" height="10" fill="#fff" />
                    <path d="M515 1125l8-26 9 26z" fill="#fff" />
                    <path d="M398 1400l7-24 8 24z" fill="#ffff00" />
                  </g>
                </g>
                <path :d="`M${c.clipX} 362.500H${c.plotEnd}`" stroke="#e00000" />
                <path :d="`M${c.clipX} 467.500H${c.plotEnd}`" stroke="#20c870" />
                <path :d="`M${c.clipX} 409.500H${c.rightX - 2}`" stroke="#1e90ff" stroke-dasharray="2 1" />
                <rect y="344" :width="c.width" height="2" fill="#c8c8c8" />
                <g class="axis">
                  <text v-for="t in leftScale(c)" :key="t.text" :x="t.x" :y="t.y" text-anchor="end">{{ t.text }}</text>
                  <rect :x="c.rightX - 2" :y="c.top + c.marked * c.step - 6" width="31" height="12" fill="#ffc080" />
                  <text v-for="t in rightScale(c)" :key="'r' + t.text" :x="t.x" :y="t.y" :class="{ marked: t.marked }">{{ t.text }}</text>
                  <text v-for="(t, i) in lowerLeft" :key="'l' + t" :x="c.leftX" :y="371 + i * 21" text-anchor="end">{{ t }}</text>
                  <text v-for="(t, i) in lowerRight" :key="'m' + t" :x="c.rightX" :y="371 + i * 21">{{ t }}</text>
                  <text v-for="t in c.times" :key="t.text" :x="t.x" :y="t.y + 3" text-anchor="middle">{{ t.text }}</text>
                  <text class="name" x="40" y="11">MACD</text>
                  <text class="name" x="40" y="357">MACD 2</text>
                </g>
                <g v-if="c.id === 'slim'" class="notes">
                  <text v-for="g in gains" :key="g.text" class="gain" :x="g.x" :y="g.y + 5">{{ g.text }}</text>
                  <text v-for="g in ticks" :key="g.text" class="tick" :x="g.x" :y="g.y + 5">{{ g.text }}</text>
                  <text class="zero" x="73" y="278">ZERO draw-down</text>
                  <text class="zero" x="73" y="296">after entry</text>
                </g>
                <path :d="`M${c.width - 10} 0h10v10h-10z`" fill="#b8c4e0" />
                <path :d="`M${c.width - 2} 2l-3 3 3 3M${c.width - 5} 2l-3 3 3 3`" stroke="#35539c" fill="none" />
              </svg>
              <aside v-if="c.id === 'slim'" class="order">
                <svg viewBox="0 0 6 14" class="calc"><rect width="6" height="14" fill="#6f92cc" /><path d="M1 5h4M1 8h4M1 11h4" stroke="#fff" stroke-dasharray="1 .5" /></svg>
                <label class="qty">Qty: <input value="1" readonly></label>
                <label class="olabel" for="pos">Pos:</label>
                <input id="pos" class="ofield" value="0" readonly>
                <label class="olabel" for="pl">Open P/L:</label>
                <input id="pl" class="ofield" value="$0.00" readonly>
                <button class="obtn buy">Buy MKT</button>
                <button class="obtn sell">Sell MKT</button>
                <button class="obtn off">Exit at MKT &amp; Cxl</button>
                <button class="obtn off">Reverse &amp; Cxl</button>
                <button class="obtn off">Cxl Offers</button>
                <button class="obtn strategy"><svg viewBox="0 0 10 10"><circle cx="4" cy="6" r="3" fill="#e0703c" /><circle cx="7" cy="4" r="2.500" fill="#6f92cc" /></svg>Strategy<i class="arrow"></i></button>
              </aside>
            </div>
            <div class="chartscroll"><button aria-label="Scroll left">◂</button><span class="grow"></span><span class="cthumb"></span><button aria-label="Scroll right">▸</button></div>
          </article>
          <svg class="pixelgrid" aria-hidden="true">
            <defs><pattern id="px" width="5.988" height="5.988" patternUnits="userSpaceOnUse"><path d="M.5 0v5.988M0 .5h5.988" stroke="#808080" stroke-opacity=".5" stroke-dasharray="1 1" /></pattern></defs>
            <rect width="100%" height="100%" fill="url(#px)" />
          </svg>
        </div>
        <div class="vscroll"><button aria-label="Scroll up">▴</button></div>
      </div>
    </section>

    <section class="window explorer" aria-label="a Printscreen folder">
      <header class="titlebar">
        <svg class="ico"><use href="#i-grid" /></svg>
        <span class="title">a Printscreen folder</span>
        <button class="chrome" aria-label="Minimize"><svg><use href="#i-min" /></svg></button>
        <button class="chrome" aria-label="Maximize"><svg><use href="#i-max" /></svg></button>
        <button class="chrome last" aria-label="Close"><svg><use href="#i-close" /></svg></button>
      </header>
      <div class="address">
        <svg class="navs" viewBox="0 0 34 16"><g fill="#c8c8c8" stroke="#8a8a8a"><circle cx="9" cy="8" r="7" /><circle cx="25" cy="8" r="7" /></g><path d="M13 8H6l3-3M6 8l3 3M21 8h7l-3-3M28 8l-3 3" stroke="#f4f4f4" stroke-width="1.500" fill="none" /></svg>
        <nav class="crumbs"><svg class="mini-ico"><use href="#i-grid" /></svg><i class="tri"></i><a href="#docs">My Docume...</a><i class="tri"></i><a href="#folder">a Printscreen folder</a><i class="tri"></i><span class="grow"></span><i class="tri small-tri"></i>
          <svg class="refresh" viewBox="0 0 12 10"><rect width="12" height="10" rx="1" fill="#2fa82f" /><path d="M2 5l2-3v2h2M10 5 8 8V6H6" stroke="#fff" fill="none" /></svg></nav>
        <input class="search" aria-label="Search" value="Se..." readonly>
        <svg class="refresh" viewBox="0 0 12 12"><rect width="12" height="12" rx="1" fill="#4a90e2" /><circle cx="7" cy="5" r="3" fill="#bfe0ff" stroke="#fff" /><path d="M2 10l3-3" stroke="#fff" stroke-width="1.500" /></svg>
      </div>
      <nav class="menubar"><a href="#file">File</a><a href="#edit">Edit</a><a href="#view">View</a><a href="#tools">Tools</a><a href="#help">Help</a></nav>
      <div class="commands">
        <button>Organize<i class="arrow k"></i></button>
        <button><svg class="mini-ico"><use href="#i-png" /></svg>Open<i class="arrow k"></i></button>
        <button>Share with<i class="arrow k"></i></button>
        <button>Print</button><span class="more">»</span><span class="grow"></span>
        <svg class="views" viewBox="0 0 12 12"><path d="M0 1h3M0 4h3M0 7h3M0 10h3M4 1h3M4 4h3M4 7h3M4 10h3M8 1h3M8 4h3M8 7h3M8 10h3" stroke="#5a6a80" /></svg><i class="arrow k"></i>
        <svg class="views" viewBox="0 0 12 12"><path d="M.500 1.500h11v9H.500z" fill="#fff" stroke="#7a9cc0" /><path d="M8 2h3v8H8z" fill="#5fa6dc" /></svg>
        <svg class="views"><use href="#i-help" /></svg>
      </div>
      <table class="files">
        <thead><tr><th>Name <i class="sort"></i></th><th class="date">Date</th></tr></thead>
        <tbody>
          <tr v-for="f in files" :key="f.name" :class="{ selected: f.selected }">
            <td><span class="fname"><svg class="mini-ico"><use :href="'#' + f.icon" /></svg>{{ f.name }}</span></td><td class="date">{{ f.date }}</td>
          </tr>
        </tbody>
      </table>
      <div class="filespace"></div>
      <div class="hscroll"><button aria-label="Scroll left">◂</button><span class="hthumb"></span><span class="grow"></span><button aria-label="Scroll right">▸</button></div>
    </section>

    <section class="viewer" aria-label="Windows Photo Viewer">
      <header class="titlebar">
        <svg class="ico"><use href="#i-photo" /></svg>
        <span class="title">03-12-22 Layout.png - Windows Photo Viewer</span>
        <button class="chrome" aria-label="Minimize"><svg><use href="#i-min" /></svg></button>
        <button class="chrome" aria-label="Maximize"><svg><use href="#i-max" /></svg></button>
        <button class="chrome last" aria-label="Close"><svg><use href="#i-close" /></svg></button>
      </header>
      <nav class="vmenu">
        <button>File<i class="tri"></i></button><button>Print<i class="tri"></i></button><button>E-mail</button><button>Burn<i class="tri"></i></button><button>Open<i class="tri"></i></button>
        <span class="grow"></span><svg class="help"><use href="#i-help" /></svg>
      </nav>
      <div class="stage">
        <svg class="layout" viewBox="0 0 701 222" role="img" aria-label="Trading layout">
          <rect width="701" height="222" fill="#000" />
          <g transform="matrix(.4583 0 0 .1996 -10 -11.4)">
            <g v-for="m in minis" :key="m.title">
              <rect :x="m.x" :y="m.y" :width="m.w" height="20" fill="#000" stroke="#777" class="thin" />
              <rect :x="m.x + m.w - 12" :y="m.y + 2" width="11" height="17" fill="#bbb" />
              <rect :x="m.x" :y="m.y + 20" :width="m.w" height="14" fill="#c4c4c4" />
              <rect :x="m.x + m.w * 0.5" :y="m.y + 21" width="36" height="12" fill="#fff" />
              <path v-for="(h, i) in miniHumps(m)" :key="'h' + i" class="ln" :d="h.d" :stroke="h.up ? '#1e80ff' : '#0000ff'" stroke-width="1" />
              <path v-for="(b, i) in miniBars(m)" :key="i" class="ln" :d="b.d" :stroke="b.red ? '#a01010' : '#909090'" stroke-width="1" />
              <polygon :points="miniArea(m)" :fill="m.fill" />
              <path class="ln" :d="`M${m.x + 15} ${m.split + 16}H${m.x + m.w - 36}`" stroke="#b00000" stroke-width="1" />
              <path class="ln" :d="`M${m.x + 15} ${m.bottom - 30}H${m.x + m.w - 36}`" stroke="#108050" stroke-width="1" />
              <polyline class="ln" :points="miniWave(m, 0.9, 0.9, 0)" stroke="#b89020" stroke-width="1" />
              <polyline class="ln" :points="miniWave(m, 0.8, 0.9, 0.5)" stroke="#b07858" stroke-width="1" />
              <polyline class="ln" :points="miniWave(m, 0.5, 0.3, 2)" stroke="#d0d0d0" stroke-width="1" />
              <rect :x="m.x" :y="m.split" :width="m.w" height="4" fill="#999" />
              <rect :x="m.x" :y="m.bottom - 9" :width="m.w" height="9" fill="#c4c4c4" />
              <path class="ln" :d="`M${m.x + m.w - 20} ${m.y + 50}V${m.bottom - 30}`" stroke="#777" stroke-width="4" stroke-dasharray="1 3" />
              <path class="ln" :d="`M${m.x + 8} ${m.y + 50}V${m.bottom - 30}`" stroke="#555" stroke-width="4" stroke-dasharray="1 3" />
            </g>
            <rect x="22" y="596" width="427" height="13" fill="#ddd" /><rect x="22" y="1150" width="427" height="14" fill="#ddd" /><rect x="615" y="1150" width="263" height="14" fill="#ddd" />
            <rect x="22" y="609" width="1286" height="5" fill="#aaa" />
            <path class="ln" d="M232 95V450M286 95V450M254 95V450M402 95V450" stroke="#5a5a10" stroke-width="1" />
            <path class="ln" d="M798 100V455M160 650V1010M225 650V1010" stroke="#80500a" stroke-width="1" />
            <path class="ln" d="M424 95V450M841 650V1000M300 650V1010" stroke="#0a6060" stroke-width="1" />
            <rect x="194" y="363" width="14" height="15" fill="#9fe0e8" /><rect x="434" y="360" width="14" height="15" fill="#9fe0e8" /><rect x="651" y="352" width="15" height="14" fill="#20d080" /><rect x="651" y="429" width="15" height="14" fill="#ffff00" /><rect x="857" y="270" width="16" height="15" fill="#20d080" /><rect x="857" y="413" width="16" height="15" fill="#ffff00" /><rect x="1157" y="413" width="16" height="15" fill="#ffff00" /><rect x="255" y="950" width="15" height="14" fill="#9fe0e8" /><rect x="434" y="920" width="14" height="14" fill="#9fe0e8" />
            <rect x="1257" y="57" width="51" height="553" fill="#c0c0c0" />
            <path class="ln" d="M1257 500h51M1257 530h51" stroke="#888" stroke-width="1" />
            <g v-for="w in miniWindows" :key="w.title + w.x">
              <rect :x="w.x" :y="w.y" :width="w.w" :height="w.h" fill="#c0c0c0" />
              <rect :x="w.x + 2" :y="w.y + 4" :width="w.w - 4" height="19" fill="#000" />
              <rect :x="w.x + w.w - 12" :y="w.y + 5" width="10" height="16" fill="#bbb" />
            </g>
            <rect x="1312" y="275" width="70" height="850" fill="#fff" /><rect x="1310" y="275" width="25" height="850" fill="#006d1b" /><rect x="1358" y="275" width="25" height="850" fill="#8b0008" />
            <rect v-for="y in ladder" :key="y" x="1341" :y="y" width="11" height="7" fill="#555" /><rect x="1335" y="418" width="23" height="10" fill="#ff6060" />
            <rect x="1391" y="272" width="106" height="108" fill="#fff" /><rect x="1387" y="445" width="111" height="102" fill="#fff" /><rect x="1387" y="597" width="111" height="78" fill="#fff" /><path class="ln" d="M1387 615h75M1387 640h75M1387 665h75M1405 597v68M1425 597v68M1445 597v68" stroke="#ddd" stroke-width="1" />
            <rect x="1387" y="730" width="111" height="38" fill="#fff" /><rect x="1387" y="795" width="111" height="75" fill="#fff" /><rect x="1402" y="806" width="96" height="52" fill="#f4f060" />
            <rect x="1393" y="944" width="100" height="170" fill="#fff" />
            <rect x="452" y="712" width="161" height="315" fill="#fff" /><rect x="456" y="826" width="157" height="11" fill="#c0c0c0" />
            <rect x="452" y="1090" width="68" height="72" fill="#fff" /><rect x="528" y="1092" width="85" height="55" fill="#fff" />
            <rect x="576" y="640" width="24" height="14" fill="#fff" />
            <path class="ln" d="M1175 60v550M877 60v550M449 60v550M271 615v547M1104 615v547M1308 57v1107" stroke="#aaa" stroke-width="1" />
          </g>
          <g class="tiny">
            <text v-for="m in minis" :key="m.title" :x="sx(m.x) + 4" :y="sy(m.y) + 3">{{ m.title }}</text>
            <text v-for="w in miniWindows" :key="w.title + w.x" :x="sx(w.x) + 3" :y="sy(w.y) + 4">{{ w.title }}</text>
            <text class="ink" v-for="(t, i) in miniMenu" :key="t + i" :x="sx(1260)" :y="sy(90 + i * 13)">{{ t }}</text>
            <text class="ink strong" :x="sx(1260)" :y="sy(70)">Start</text>
            <text class="ink" :x="sx(1260)" :y="sy(362)">Worth it whe...</text><text class="ink" :x="sx(1260)" :y="sy(390)">YouTube - Op...</text><text class="ink" :x="sx(1260)" :y="sy(404)">a Printscreen...</text><text class="ink" :x="sx(1260)" :y="sy(418)">Windows Tas...</text>
            <text class="ink" :x="sx(1271)" :y="sy(517)">Desktop</text><text class="ink" :x="sx(1271)" :y="sy(560)">6:35 AM</text><text class="ink" :x="sx(1270)" :y="sy(578)">Saturday</text><text class="ink" :x="sx(1268)" :y="sy(596)">3/12/2022</text>
            <text :x="sx(143)" :y="sy(165)">DOW 30</text>
            <text class="ink strong" v-for="(f, i) in files" :key="f.name" :x="sx(460)" :y="sy(730 + i * 14)">{{ f.name }}</text>
            <text class="ink strong" :x="sx(456)" :y="sy(690)">Organize   Open   Share with   Print</text><text class="ink strong" :x="sx(456)" :y="sy(710)">Name</text><text class="ink strong" :x="sx(578)" :y="sy(710)">Date</text>
            <text class="ink strong" :x="sx(28)" :y="sy(606)">Connected</text><text class="ink strong" :x="sx(28)" :y="sy(1161)">Connected</text><text class="ink strong" :x="sx(620)" :y="sy(1161)">Connected  AutoX</text><text class="ink strong" :x="sx(700)" :y="sy(1161)">Strategies: server-side  Workspace...</text>
            <text class="ink" v-for="i in 12" :key="'q' + i" :x="sx(1399)" :y="sy(942 + i * 14)">YMH22: {{ i }} ticks</text>
          </g>
        </svg>
      </div>
      <footer class="vcontrols">
        <svg viewBox="0 0 220 28" aria-label="Viewer controls"><circle cx="8" cy="13" r="3" fill="#cfe4f8" stroke="#4070a8" /><path d="M10 16l4 4" stroke="#c07030" stroke-width="2" /><path d="M17 12h4l-2 3z" fill="#44546a" /><path d="M40 10h7v8h-7z" fill="#6fa0d8" /><rect x="60" y="8" width="80" height="12" rx="6" fill="#7d94b4" stroke="#5a6f8c" /><circle cx="100" cy="14" r="11" fill="#1c57b8" stroke="#b8c8dc" stroke-width="2" /><path d="M95 10h10v7H95z" fill="#fff" /><path d="M72 10v8M80 10l-6 4 6 4zM128 10v8M120 10l6 4-6 4z" fill="#fff" stroke="#fff" /><path d="M163 10a4 4 0 1 1-3 6M187 10a4 4 0 1 0 3 6" stroke="#2860b0" stroke-width="2" fill="none" /><path d="M207 10l7 8M214 10l-7 8" stroke="#c02020" stroke-width="2" /></svg>
      </footer>
    </section>

    <aside class="taskbar" aria-label="Taskbar">
      <button class="start"><svg class="ico"><use href="#i-flag" /></svg>Start</button>
      <hr>
      <button v-for="(t, i) in taskItems" :key="i" class="task" :class="{ wide: t.text, active: t.active }" :aria-label="t.text || 'Quick launch ' + (i + 1)">
        <svg class="ico"><use :href="'#' + t.icon" /></svg><span v-if="t.text">{{ t.text }}</span>
      </button>
      <span class="grow"></span>
      <hr>
      <button class="desk">Desktop</button>
      <span class="chev">»</span>
      <div class="tray">
        <span class="chev back">«</span>
        <time>6:29 AM</time><span>Saturday</span><span>3/12/2022</span>
        <svg viewBox="0 0 18 14"><rect x=".500" y=".500" width="17" height="13" fill="#3c78e0" stroke="#b8c8e8" /><path d="M1 1h8l-6 10H1z" fill="#7fb0ff" /></svg>
      </div>
    </aside>

    <div class="monitor7"></div>

    <section class="window manager" aria-label="Windows Task Manager">
      <header class="titlebar">
        <svg class="ico"><use href="#i-cpu" /></svg>
        <span class="title">Windows Task Manager</span>
        <button class="chrome" aria-label="Minimize"><svg><use href="#i-min" /></svg></button>
        <button class="chrome" aria-label="Maximize"><svg><use href="#i-max" /></svg></button>
        <button class="chrome last" aria-label="Close"><svg><use href="#i-close" /></svg></button>
      </header>
      <nav class="mmenu"><a href="#m1">File</a><a href="#m2">Options</a><a href="#m3">View</a><a href="#m4">Windows</a><a href="#m5">Help</a></nav>
      <nav class="mtabs"><button class="on">Applications</button><button>Processes</button><button>Services</button><button>Performance</button><button>Networking</button><button>Users</button></nav>
      <div class="mpanel">
        <div class="sunken mlist">
          <table>
            <thead><tr><th>Task <i class="sort down"></i></th><th class="st">Status</th><th class="end"></th></tr></thead>
            <tbody><tr v-for="t in tasks" :key="t.name"><td><span class="fname"><svg class="mini-ico"><use :href="'#' + t.icon" /></svg>{{ t.name }}</span></td><td>Running</td><td></td></tr></tbody>
          </table>
        </div>
        <div class="mactions"><button class="push">End Task</button><button class="push">Switch To</button><button class="push">New Task...</button></div>
      </div>
      <footer class="status"><span class="s1">Processes: 85</span><span class="s2">CPU Usage: 0%</span><span class="grow">Physical Memory: 24%</span></footer>
    </section>

    <h2 v-for="c in captions" :key="c.cls" class="caption" :class="c.cls">
      <span v-for="l in c.lines" :key="l">{{ l }}</span>
    </h2>
  </main>
</template>

<style>
body { background: #000; }
</style>

<style scoped>
* { box-sizing: border-box; }
.desktop { position: relative; width: 100%; min-height: 100vh; background: #000; overflow: hidden; font-family: "DejaVu Sans Condensed", "DejaVu Sans", sans-serif; font-size: 12px; color: #000; }
.defs { position: absolute; width: 0; height: 0; }
button, input { font: inherit; color: inherit; padding: 0; margin: 0; border: 0; background: none; border-radius: 0; }
a { color: inherit; text-decoration: none; }
table { border-collapse: collapse; width: 100%; table-layout: fixed; }
th, td { padding: 0; text-align: left; font-weight: inherit; }
.grow { flex: 1; }
.ln { fill: none; vector-effect: non-scaling-stroke; }
.thin { vector-effect: non-scaling-stroke; }

.caption { position: absolute; margin: 0; color: #fff; font: italic 400 69px/76px "Liberation Sans", Arial, sans-serif; }
.caption span { display: block; white-space: pre; }
.boxed { background: #000; }
.cap-apex { left: 8.54%; top: 76px; }
.cap-opens { left: 7.2%; top: 416px; }
.cap-paint { left: 30.37%; top: 322px; width: 22.18%; height: 94px; }
.cap-folder { left: 28.8%; top: 897px; width: 9.43%; height: 233px; }
.cap-photo { left: 41.41%; top: 710px; width: 11.22%; height: 149px; }
.cap-taskbar { left: 65.6%; top: 270px; }
.cap-manager { left: 86.9%; top: 739px; }

.window, .viewer, .paint, .taskbar, .monitor7 { position: absolute; }
.window { background: #c0c0c0; border: 2px solid; border-color: #e0e0e0 #808080 #808080 #e0e0e0; display: flex; flex-direction: column; }
.titlebar { display: flex; align-items: center; height: 24px; flex: none; background: #000; color: #fff; font-size: 16px; line-height: 24px; padding: 0 1px 0 7px; }
.ico { width: 10px; height: 10px; flex: none; }
.mini-ico { width: 10px; height: 10px; flex: none; }
.title { flex: 1; margin-left: 8px; white-space: nowrap; }
.chrome { width: 11px; height: 22px; flex: none; background: #c0c0c0; border: 1px solid; border-color: #f0f0f0 #606060 #606060 #f0f0f0; }
.chrome svg { display: block; width: 100%; height: 100%; }
.chrome.last { margin-left: 1px; }
.push { background: #c0c0c0; border: 1px solid; border-color: #f0f0f0 #505050 #505050 #f0f0f0; }
.sunken { background: #fff; border: 1px solid; border-color: #606060 #f0f0f0 #f0f0f0 #606060; }
.arrow { display: inline-block; width: 0; height: 0; border: 2px solid transparent; border-top: 3px solid #44546a; border-bottom: 0; margin: 2px; }
.arrow.k { border-top-color: #000; margin: 0 8px; vertical-align: middle; }
.tri { display: inline-block; width: 0; height: 0; border: 4px solid transparent; border-top: 5px solid currentColor; border-bottom: 0; margin: 0 5px; flex: none; }
.sort { display: inline-block; border: 4px solid transparent; border-bottom: 4px solid #808080; border-top: 0; vertical-align: middle; margin-left: 3px; }
.sort.down { border-top: 3px solid #808080; border-bottom: 0; border-left-width: 3px; border-right-width: 3px; }

.update { left: 8.86%; top: 234px; width: 10.33%; height: 178px; }
.update-body { padding: 10px 11px 14px 10px; flex: 1; display: flex; flex-direction: column; font: 8px/11px "Liberation Sans", Arial, sans-serif; }
.update-list { height: 104px; }
.update-list th { background: #c0c0c0; height: 12px; padding-left: 4px; border-right: 1px solid #808080; border-bottom: 1px solid #808080; white-space: nowrap; }
.update-list th:last-child { border-right: 0; }
.update-list td { height: 13px; padding-left: 4px; white-space: nowrap; }
.c1 { width: 50px; } .c2 { width: 66px; } .c3 { width: 53px; } .update-list .c4 { width: 37px; text-align: right; padding-right: 3px; } .c5 { width: 34px; } .c6 { width: 40px; }
.mid input { display: block; width: 8px; height: 8px; margin-left: 9px; accent-color: #444; }
.update-actions { display: flex; gap: 4px; margin-top: 5px; }
.update-actions .push { width: 100px; height: 17px; }
.default { outline: 1px solid #000; outline-offset: -1px; }

.paint { left: 28.07%; top: 0; width: 28.07%; height: 647px; display: flex; flex-direction: column; background: #000; }
.paint-title { padding-left: 7px; padding-right: 3px; }
.paint-title .title { margin-left: 1px; }
.quick { width: 66px; height: 20px; margin-left: 13px; display: block; }
.quick svg { display: block; width: 66px; height: 20px; }
.tabs { display: flex; height: 17px; flex: none; background: #dde8f5; font: 8px/16px "Open Sans", "Noto Sans", sans-serif; color: #1e395b; border-bottom: 1px solid #b8cbe4; margin-left: 4px; }
.filemenu { width: 40px; height: 17px; background: linear-gradient(#2a62b4, #164a98 50%, #3b86d6); }
.filemenu svg { width: 20px; height: 12px; display: block; margin: auto; }
.tab { width: 36px; height: 17px; }
.tab.current { background: #fbfdff; border: 1px solid #c0d2ea; border-bottom: 0; }
.help { width: 10px; height: 12px; margin: 2px 3px; }
.ribbon { display: flex; height: 66px; flex: none; background: linear-gradient(#f8fbff, #e4eefa 30%, #dbe6f5 60%, #dde8f6); border-bottom: 1px solid #a0b4d0; font: 8px/10px "Open Sans", "Noto Sans", sans-serif; color: #1e395b; margin-left: 4px; }
.group { display: flex; flex-direction: column; align-items: center; padding: 3px 4px 1px; border-right: 1px solid #c2d2e8; margin: 2px 0 4px; flex: none; }
.controls { display: flex; flex: 1; gap: 4px; align-items: flex-start; }
.glabel { color: #6f86a6; line-height: 8px; }
.g-clip { width: 71px; } .g-image { width: 82px; } .g-tools { width: 54px; } .g-brush { width: 36px; } .g-shapes { width: 165px; } .g-size { width: 35px; } .g-colors { width: 252px; }
.big { display: flex; flex-direction: column; align-items: center; line-height: 10px; }
.big svg { width: 22px; height: 22px; margin-bottom: 3px; }
.stack { display: flex; flex-direction: column; gap: 3px; }
.small { display: flex; align-items: center; gap: 2px; height: 12px; white-space: nowrap; }
.small svg { width: 10px; height: 11px; }
.dim { color: #8d99a8; }
.tools { width: 48px; height: 40px; }
.hot { background: linear-gradient(#ffd68a, #ffc158 50%, #ffcf78); border: 1px solid #c8962c; }
.g-brush { padding: 0 2px; }
.g-brush .hot { width: 30px; height: 46px; }
.gallery { width: 108px; height: 42px; }
.pick { width: 28px; height: 46px; margin-top: -3px; }
.chip { display: block; width: 22px; height: 22px; margin: 2px 0 3px; border: 1px solid #808080; outline: 1px solid #fff; outline-offset: -2px; flex: none; }
.chip.black { background: #000; }
.chip.white { background: #fff; width: 18px; height: 18px; margin: 4px 0 5px; }
.swatches { display: grid; grid-template-columns: repeat(10, 14px); grid-auto-rows: 14px; gap: 2px; margin-top: -2px; }
.swatches button { border: 1px solid #808080; box-shadow: inset 0 0 0 1px #fff8; }
.rainbow { display: block; width: 20px; height: 20px; margin: 2px 0 5px; border: 1px solid #999; background: linear-gradient(to bottom, transparent, #8088), linear-gradient(90deg, red, #ff0, #0f0, #0ff, #00f, #f0f); flex: none; }
.controls .edit { margin-left: -3px; }

.canvas { flex: 1; display: flex; background: #fff; min-height: 0; margin-left: 3px; }
.picture { position: relative; display: flex; width: 839px; height: 537px; background: #000; padding: 4px 0 0 6px; margin-top: 2px; flex: none; }
.chartwin { border-left: 1px solid #c8c8c8; border-right: 1px solid #888; display: flex; flex-direction: column; background: #e0e0e0; flex: none; }
.chartwin.wide { width: 439px; }
.chartwin.slim { width: 384px; border-right: 3px solid #a8a8a8; }
.charttitle { display: flex; align-items: center; height: 20px; flex: none; background: #000; color: #fff; border-bottom: 1px solid #888; font-size: 12px; padding-left: 4px; white-space: nowrap; overflow: hidden; }
.cico { width: 9px; height: 10px; margin-right: 5px; flex: none; }
.cbtns { display: flex; margin-left: auto; }
.cbtns .chrome { width: 8px; height: 17px; }
.charttools { display: flex; align-items: center; height: 18px; flex: none; background: linear-gradient(90deg, #eee, #e4e4e4 80%, #bcbcbc 80%); font-weight: 700; font-size: 9px; white-space: nowrap; }
.t182 { width: 182px; height: 17px; margin-left: 2px; } .t30 { width: 30px; height: 17px; } .t52 { width: 52px; height: 17px; } .t104 { width: 104px; height: 17px; }
.ticks { width: 55px; height: 16px; background: #fff; padding-left: 2px; }
.mode { margin: 0 4px 0 5px; }
.modebtn { display: flex; align-items: center; width: 88px; height: 14px; background: #b6b6f4; border: 1px solid #4747c8; margin-left: 4px; font-size: 9px; }
.modebtn svg { width: 30px; height: 14px; }
.slim .ticks { width: 58px; border-right: 4px solid #ccc; }
.chartbody { display: flex; flex: 1; min-height: 0; }
.plot { display: block; flex: 1; min-width: 0; height: 486px; }
.axis text { font: 9px "Liberation Sans", Arial, sans-serif; fill: #fff; }
.axis .name { fill: #8a8a8a; }
.axis .marked { fill: #000; }
.notes text { font: italic 700 15px "Liberation Sans", Arial, sans-serif; }
.gain { fill: #00ff40; } .tick { fill: #fff; } .zero { fill: #ff7f27; }
.order { width: 86px; background: #dfdfdf; font-weight: 700; font-size: 9px; line-height: 12px; display: flex; flex-direction: column; align-items: center; color: #222; }
.calc { width: 5px; height: 14px; margin: 14px 0 1px; }
.qty { display: flex; align-items: center; height: 13px; gap: 4px; }
.qty input { width: 12px; height: 10px; background: #fff; border: 1px solid #888; font-size: 8px; }
.olabel { height: 12px; }
.ofield { width: 35px; height: 16px; background: #fff; text-align: right; padding-right: 1px; margin-bottom: 1px; }
.obtn { width: 86px; height: 15px; margin-bottom: 1px; white-space: nowrap; }
.buy { background: #90ee90; } .sell { background: #ff8080; }
.off { color: #8d8d8d; }
.order .sell { margin-bottom: 4px; }
.strategy { display: flex; align-items: center; gap: 1px; margin-top: 85px; padding-left: 6px; color: #111; }
.strategy svg { width: 9px; height: 9px; }
.strategy .arrow { margin-left: 26px; border-top-color: #000; }
.chartscroll { display: flex; height: 10px; flex: none; background: #dcdcdc; font-size: 8px; line-height: 8px; }
.chartscroll button { width: 8px; background: #c8c8c8; border: 1px solid #999; font-size: 6px; line-height: 7px; }
.cthumb { width: 36px; background: #bcbcbc; }
.slim .cthumb { width: 24px; }
.slim .chartscroll { margin-right: 86px; }
.pixelgrid { position: absolute; left: 0; top: 0; width: 100%; height: 100%; pointer-events: none; }
.vscroll { width: 9px; margin-left: auto; background: #c0c0c0; border-left: 1px solid #e8e8e8; margin-right: 1px; }
.vscroll button { display: block; width: 8px; height: 15px; font-size: 7px; border-bottom: 1px solid #808080; }

.explorer { left: 28.08%; top: 649px; width: 10.78%; height: 494px; font-weight: 700; font-size: 12px; }
.explorer .titlebar { font-weight: 400; }
.address { display: flex; align-items: center; height: 22px; flex: none; border-bottom: 1px solid #808080; border-top: 1px solid #909090; gap: 3px; padding: 0 1px; }
.navs { width: 34px; height: 16px; }
.crumbs { display: flex; align-items: center; flex: 1; margin-left: 4px; height: 17px; border: 1px solid; border-color: #808080 #e8e8e8 #e8e8e8 #808080; white-space: nowrap; }
.small-tri { border-width: 3px 3px 0; }
.refresh { width: 12px; height: 10px; }
.search { width: 48px; height: 16px; background: #fff; border: 1px solid #808080; padding-left: 6px; }
.menubar { display: flex; gap: 10px; height: 21px; flex: none; line-height: 21px; padding-left: 10px; border-bottom: 1px solid #909090; }
.commands { display: flex; align-items: center; height: 25px; flex: none; padding-left: 10px; }
.commands button { display: flex; align-items: center; gap: 4px; margin-right: 3px; white-space: nowrap; }
.commands button .arrow.k { margin: 0 6px 0 4px; }
.more { margin-left: 4px; font-size: 12px; }
.views { width: 11px; height: 11px; margin-right: 9px; }
.commands > .arrow.k { margin: 0 11px 0 0; }
.files { flex: none; background: #fff; }
.files th { background: #c0c0c0; height: 23px; padding-left: 12px; border-right: 1px solid #606060; border-bottom: 1px solid #606060; }
.files .date { width: 102px; padding-left: 5px; white-space: nowrap; overflow: hidden; }
.files tbody::before { content: ""; display: block; height: 5px; }
.files td { height: 15px; line-height: 15px; background: #fff; padding-left: 10px; }
.files tbody tr:nth-child(2n) td { height: 16px; line-height: 16px; }
.files .selected td { background: linear-gradient(#0000d0, #0000d0) no-repeat 10px 0; color: #fff; }
.files .selected td.date { background: #0000d0; }
.fname { display: flex; align-items: center; gap: 4px; padding-left: 3px; white-space: pre; }
.filespace { flex: 1; background: #fff; }
.hscroll { display: flex; height: 10px; flex: none; background: #dfdfdf; }
.hscroll button { width: 10px; background: #c0c0c0; border: 1px solid #888; font-size: 6px; line-height: 7px; }
.hthumb { width: 66%; background: #c0c0c0; border: 1px solid; border-color: #f0f0f0 #606060 #606060 #f0f0f0; }

.viewer { left: 38.88%; top: 650px; width: 17.27%; bottom: 0; background: #fff; border: 2px solid #c4c4c4; border-bottom-width: 1px; border-left-width: 4px; display: flex; flex-direction: column; }
.vmenu { display: flex; align-items: center; height: 24px; flex: none; background: linear-gradient(#f4f9fe, #e4eef8 50%, #d6e3f1 50%, #dae6f4); border-bottom: 1px solid #a0b4d0; font-weight: 700; font-size: 12px; color: #1e395b; padding-left: 7px; gap: 4px; }
.vmenu button { display: flex; align-items: center; }
.vmenu button:nth-child(3) { margin-right: 10px; }
.vmenu .tri { border-width: 5px 4px 0; }
.stage { flex: 1; padding-top: 167px; }
.layout { display: block; width: 100%; }
.tiny text { font: 3px "DejaVu Sans Condensed", "DejaVu Sans", sans-serif; fill: #eee; white-space: pre; }
.tiny .ink { fill: #111; }
.tiny .strong { font-weight: 700; }
.vcontrols { height: 33px; flex: none; background: linear-gradient(#eef4fb, #d4e0ee); display: flex; justify-content: center; align-items: center; }
.vcontrols svg { width: 220px; height: 28px; }

.taskbar { left: 80.82%; top: 0; width: 3.39%; height: 647px; background: #c0c0c0; border-left: 2px solid #e0e0e0; display: flex; flex-direction: column; align-items: center; font-size: 16px; line-height: 16px; }
.taskbar hr { width: 96%; border: 1px solid; border-color: #f0f0f0 #808080 #808080 #f0f0f0; margin: 3px 0 2px; flex: none; }
.start { align-self: flex-start; display: flex; align-items: center; width: 54px; height: 16px; margin: 1px 0 0 1px; font-weight: 700; border: 1px solid; border-color: #f0f0f0 #404040 #404040 #f0f0f0; overflow: hidden; }
.task { display: flex; align-items: center; justify-content: center; height: 16px; flex: none; }
.task.wide { width: 133px; height: 15px; margin-bottom: 1px; justify-content: flex-start; gap: 3px; padding-left: 2px; border: 1px solid; border-color: #f0f0f0 #505050 #505050 #f0f0f0; white-space: nowrap; overflow: hidden; }
.task.active { font-weight: 700; font-size: 15px; background: #e0e0e0; border-color: #505050 #f0f0f0 #f0f0f0 #505050; }
.taskbar hr + .task { margin-top: 1px; }
.desk { margin: 5px 0 6px; line-height: 16px; }
.chev { font-size: 9px; line-height: 5px; font-weight: 700; margin-bottom: 3px; }
.tray { width: 135px; height: 95px; margin-bottom: 1px; border: 1px solid; border-color: #808080 #f0f0f0 #f0f0f0 #808080; display: flex; flex-direction: column; align-items: center; line-height: 21px; flex: none; }
.chev.back { align-self: flex-start; margin: 6px 0 6px 6px; }
.tray svg { width: 11px; height: 9px; }

.monitor7 { left: 84.5%; top: 143px; right: 12px; bottom: 0; border: 5px solid #99d9ea; border-bottom-width: 1px; }
.manager { left: 89.2%; top: 949px; width: 7.49%; height: 341px; }
.manager .title { margin-left: 9px; }
.mmenu { display: flex; gap: 16px; height: 20px; flex: none; line-height: 16px; padding-left: 9px; font-weight: 700; color: #808080; }
.mtabs { display: flex; align-items: flex-end; height: 14px; flex: none; padding-left: 4px; font-size: 8px; line-height: 12px; }
.mtabs button { height: 12px; padding: 0 2px; border: 1px solid; border-color: #f0f0f0 #404040 transparent #f0f0f0; border-radius: 2px 2px 0 0; white-space: nowrap; }
.mtabs .on { height: 14px; padding: 0 3px; }
.mtabs button:last-child { padding-right: 4px; }
.mpanel { margin: 0 3px 0 4px; height: 255px; border: 1px solid; border-color: #f0f0f0 #404040 #404040 #f0f0f0; padding: 11px 10px 0 11px; font-size: 8px; }
.mlist { height: 212px; }
.mlist th { background: #c0c0c0; height: 12px; line-height: 11px; padding-left: 3px; border-right: 1px solid #505050; border-bottom: 1px solid #505050; }
.mlist td { height: 12px; line-height: 11px; padding-left: 3px; }
.mlist .fname { padding-left: 0; gap: 2px; }
.st { width: 43px; } .end { width: 34px; }
.mlist .end { border-right: 0; }
.mactions { display: flex; justify-content: flex-end; gap: 3px; margin-top: 4px; }
.mactions .push { width: 56px; height: 17px; }
.status { display: flex; gap: 1px; height: 18px; margin-top: 4px; font-size: 12px; line-height: 16px; white-space: nowrap; }
.status span { border: 1px solid; border-color: #808080 #f0f0f0 #f0f0f0 #808080; overflow: hidden; }
.s1 { width: 76px; } .s2 { width: 93px; }
</style>
